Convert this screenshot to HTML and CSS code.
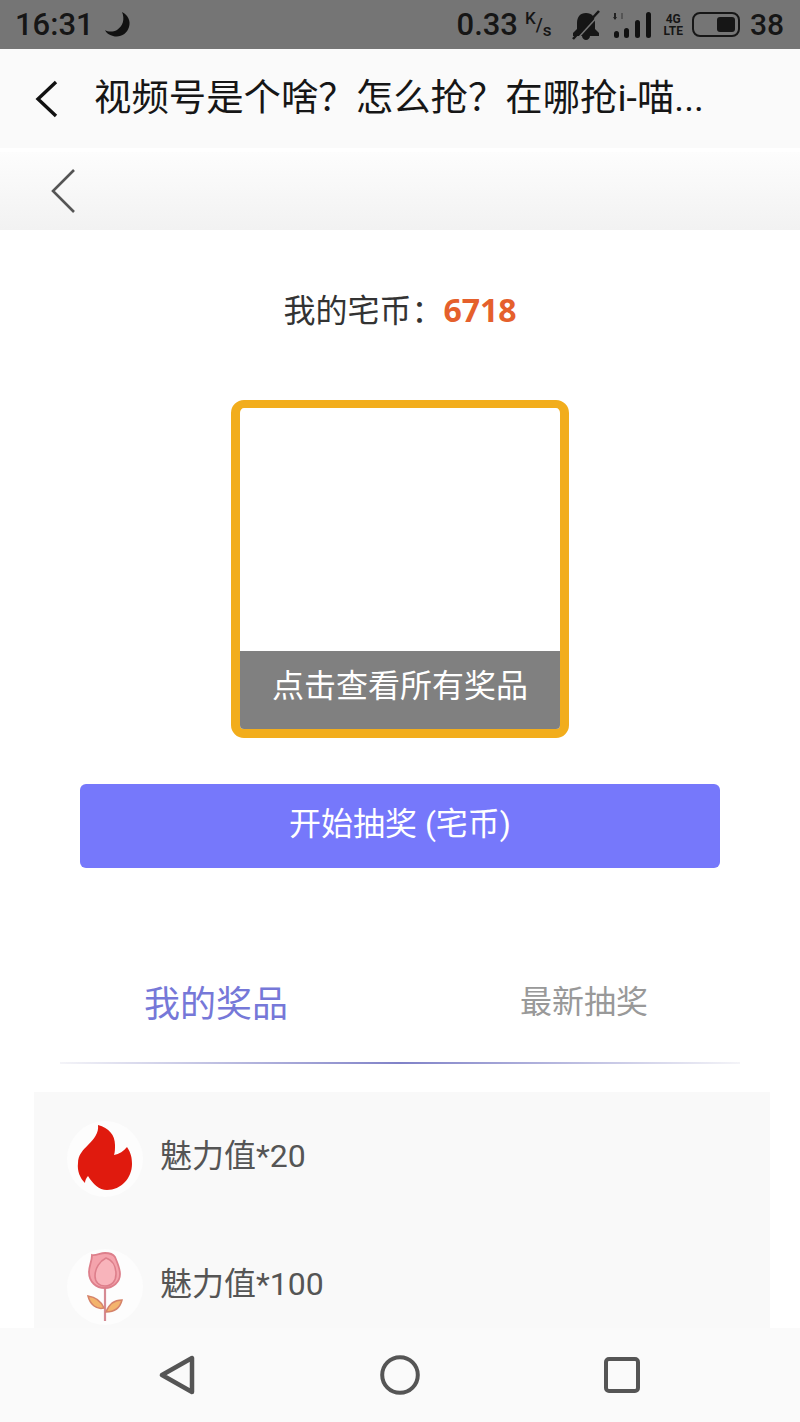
FILE: index.html
```html
<!DOCTYPE html>
<html lang="zh">

<head>
    <meta charset="utf-8">
    <title>视频号是个啥</title>
    <link rel="stylesheet" href="styles.css">
</head>

<body>
    <div class="status">
        <div class="status-left">
            <span class="time">16:31</span>
            <svg class="moon" width="30" height="28" viewBox="0 0 30 28"><path d="M19 1c6 3 9 9 7 15-2 7-9 11-16 9-4-1-7-3-8-6 3 2 8 2 12 0 6-4 8-11 5-18z" fill="#111"/></svg>
        </div>
        <div class="status-right">
            <span class="speed">0.33</span>
            <span class="unit"><sup>K</sup>/<sub>s</sub></span>
            <svg class="bell" width="28" height="30" viewBox="0 0 28 30"><path d="M14 3c-6 0-9 4-9 10v6l-4 4v3h26v-3l-4-4v-6c0-6-3-10-9-10z" fill="#161616"/><path d="M10 26h8c0 2-2 4-4 4s-4-2-4-4z" fill="#161616"/><path d="M1 29L27 1" stroke="#161616" stroke-width="2.5"/><path d="M7 27L27 5" stroke="#757575" stroke-width="1.5"/></svg>
            <svg class="signal" width="42" height="28" viewBox="0 0 42 28"><path d="M3 2v6" stroke="#222" stroke-width="2"/><path d="M1 6l2 3 2-3z" fill="#222"/><path d="M10 2v6" stroke="#555" stroke-width="2"/><rect x="2" y="20" width="5" height="7" rx="2.5" fill="#111"/><rect x="12" y="17" width="5" height="10" rx="2.5" fill="#111"/><rect x="23" y="9" width="5" height="18" rx="2.5" fill="#111"/><rect x="34" y="1" width="5" height="26" rx="2.5" fill="#111"/></svg>
            <div class="net"><span>4G</span><span>LTE</span></div>
            <div class="battery"><i></i></div>
            <span class="level">38</span>
        </div>
    </div>

    <div class="titlebar">
        <svg class="back" width="24" height="38" viewBox="0 0 24 38"><path d="M22 2L4 19l18 17" fill="none" stroke="#111" stroke-width="3.4"/></svg>
        <h1>视频号是个啥？怎么抢？在哪抢i-喵...</h1>
    </div>

    <div class="subbar">
        <svg width="26" height="44" viewBox="0 0 26 44"><path d="M24 1L3 22l21 21" fill="none" stroke="#555" stroke-width="2.6"/></svg>
    </div>

    <div class="content">
        <p class="coins">我的宅币：<b>6718</b></p>

        <div class="prize-box">
            <div class="prize-empty"></div>
            <div class="prize-caption">点击查看所有奖品</div>
        </div>

        <div class="start-btn">开始抽奖 (宅币)</div>

        <div class="tabs">
            <span class="tab tab-active">我的奖品</span>
            <span class="tab tab-new">最新抽奖</span>
        </div>
        <div class="tab-line"></div>

        <ul class="prizes">
            <li>
                <div class="prize-icon">
                    <svg class="flame" width="56" height="66" viewBox="0 0 56 66"><path d="M21 0C32 3 38 10 38 20C38 24 38 27 37 30C42 29 47 26 50 22C54 28 55 33 55 39C55 53 44 65 30 65C22 65 16 59 11 51C9 53 8 56 8 58C3 53 0 46 1 38C1 30 6 25 11 20C17 14 22 8 21 0Z" fill="#e01a0e"/></svg>
                </div>
                <span>魅力值*20</span>
            </li>
            <li>
                <div class="prize-icon">
                    <svg class="rose" width="36" height="70" viewBox="0 0 36 70"><path d="M18 35v34" stroke="#d58a93" stroke-width="2.2" fill="none"/><path d="M17 56C14 49 8 45 1 44C3 52 9 58 17 56Z" fill="#f3b46d" stroke="#d5836a" stroke-width="1.5"/><path d="M19 60C27 60 33 56 35 48C27 48 22 52 19 60Z" fill="#f3b46d" stroke="#d5836a" stroke-width="1.5"/><path d="M5 3C9 4 13 1 18 1C22 1 26 2 28 5C30 10 33 16 33 22C33 30 26 36 18 36C9 36 2 30 2 20C2 14 5 9 5 3Z" fill="#f4a3ac" stroke="#dd7f8b" stroke-width="1.8"/><path d="M19 6C25 8 29 14 29 22C29 29 25 34 18 34C12 34 8 30 8 24C8 16 13 9 19 6Z" fill="#f8b4bb" stroke="#dd7f8b" stroke-width="1.6"/></svg>
                </div>
                <span>魅力值*100</span>
            </li>
        </ul>
    </div>

    <div class="navbar">
        <svg width="38" height="40" viewBox="0 0 38 40"><path d="M3 20L33 3v34z" fill="none" stroke="#555" stroke-width="4.5" stroke-linejoin="round"/></svg>
        <svg width="40" height="40" viewBox="0 0 40 40"><circle cx="20" cy="20" r="17.8" fill="none" stroke="#555" stroke-width="4"/></svg>
        <svg class="nav-square" width="36" height="36" viewBox="0 0 36 36"><rect x="2" y="2" width="32" height="32" rx="3" fill="none" stroke="#555" stroke-width="4"/></svg>
    </div>
</body>

</html>
```

FILE: styles.css
```css
* {
    box-sizing: border-box;
}

html,
body {
    margin: 0;
    padding: 0;
}

body {
    width: 800px;
    height: 1422px;
    overflow: hidden;
    display: flex;
    flex-direction: column;
    background: #fff;
    font-family: "Roboto", "Noto Sans CJK SC", sans-serif;
    color: #333;
}

.status {
    height: 49px;
    flex: none;
    display: flex;
    justify-content: space-between;
    align-items: center;
    padding: 0 16px 0 15px;
    background: #757575;
    color: #161616;
    font-size: 30px;
    font-weight: 500;
}

.status-left,
.status-right {
    display: flex;
    align-items: center;
}

.time {
    font-size: 31px;
}

.moon {
    margin-left: 9px;
}

.speed {
    font-size: 31px;
}

.unit {
    font-size: 18px;
    margin-left: 7px;
    line-height: 1;
}

.unit sup,
.unit sub {
    font-size: 17px;
    line-height: 0;
}

.bell {
    margin-left: 20px;
}

.signal {
    margin-left: 12px;
}

.net {
    display: flex;
    flex-direction: column;
    align-items: center;
    margin-left: 10px;
    font-size: 12px;
    font-weight: 700;
    line-height: 12px;
}

.battery {
    width: 48px;
    height: 25px;
    margin-left: 9px;
    padding: 3px;
    display: flex;
    justify-content: flex-end;
    border: 2px solid #161616;
    border-radius: 8px;
}

.battery i {
    width: 18px;
    background: #161616;
    border-radius: 3px;
}

.level {
    margin-left: 10px;
}

.titlebar {
    height: 99px;
    flex: none;
    display: flex;
    align-items: center;
    padding-left: 34px;
    background: #fafafa;
}

.titlebar h1 {
    margin: 0 0 8px 36px;
    font-size: 37.4px;
    font-weight: 400;
    color: #161616;
    white-space: nowrap;
}

.subbar {
    height: 78px;
    margin-top: 4px;
    flex: none;
    display: flex;
    align-items: center;
    padding-left: 50px;
    background: linear-gradient(#fdfdfd, #f2f2f2);
}

.content {
    flex: 1;
    min-height: 0;
    display: flex;
    flex-direction: column;
    align-items: center;
    overflow: hidden;
}

.coins {
    margin: 57px 0 0;
    height: 47px;
    font-size: 32px;
    line-height: 46px;
}

.coins b {
    color: #e5602c;
    font-family: "Open Sans", sans-serif;
    font-size: 32px;
}

.prize-box {
    width: 338px;
    height: 338px;
    margin-top: 66px;
    flex: none;
    display: flex;
    flex-direction: column;
    border: solid #f2ad1c;
    border-width: 8px 9px 9px;
    border-radius: 13px;
    overflow: hidden;
}

.prize-empty {
    flex: 1;
}

.prize-caption {
    height: 78px;
    background: #808080;
    color: #fff;
    font-size: 32px;
    line-height: 70px;
    text-align: center;
}

.start-btn {
    width: 640px;
    height: 84px;
    margin-top: 46px;
    flex: none;
    background: #7678fb;
    border-radius: 6px;
    color: #fff;
    font-size: 32px;
    line-height: 80px;
    text-align: center;
}

.tabs {
    width: 100%;
    height: 128px;
    margin-top: 66px;
    flex: none;
    display: grid;
    grid-template-columns: 432px 304px;
    justify-items: center;
    align-items: center;
}

.tab {
    font-size: 32px;
    color: #999;
}

.tab-active {
    font-size: 36px;
    color: #7678d8;
    margin-top: 5px;
}

.tab-new {
    margin-top: 1px;
}

.tab-line {
    width: 680px;
    height: 2px;
    flex: none;
    background: linear-gradient(90deg, #f4f4f8, #8082c8 50%, #f4f4f8);
}

.prizes {
    list-style-type: none;
    width: 736px;
    align-self: flex-start;
    margin: 28px 0 0 34px;
    padding: 3px 0 0 33px;
    flex: 1;
    background: #f9f9f9;
}

.prizes li {
    height: 128px;
    display: flex;
    align-items: center;
    color: #555;
    font-size: 32px;
}

.prizes li span {
    margin-bottom: 12px;
}

.prize-icon {
    width: 76px;
    height: 76px;
    margin-right: 17px;
    display: flex;
    align-items: center;
    justify-content: center;
    background: #fdfdfd;
    border-radius: 50%;
}

.flame {
    margin-bottom: 3px;
}

.rose {
    margin-bottom: 1px;
}

.navbar {
    height: 94px;
    flex: none;
    display: flex;
    align-items: center;
    padding-left: 159px;
    gap: 183px;
    background: #fafafa;
}

.nav-square {
    margin-left: 1px;
}
```
